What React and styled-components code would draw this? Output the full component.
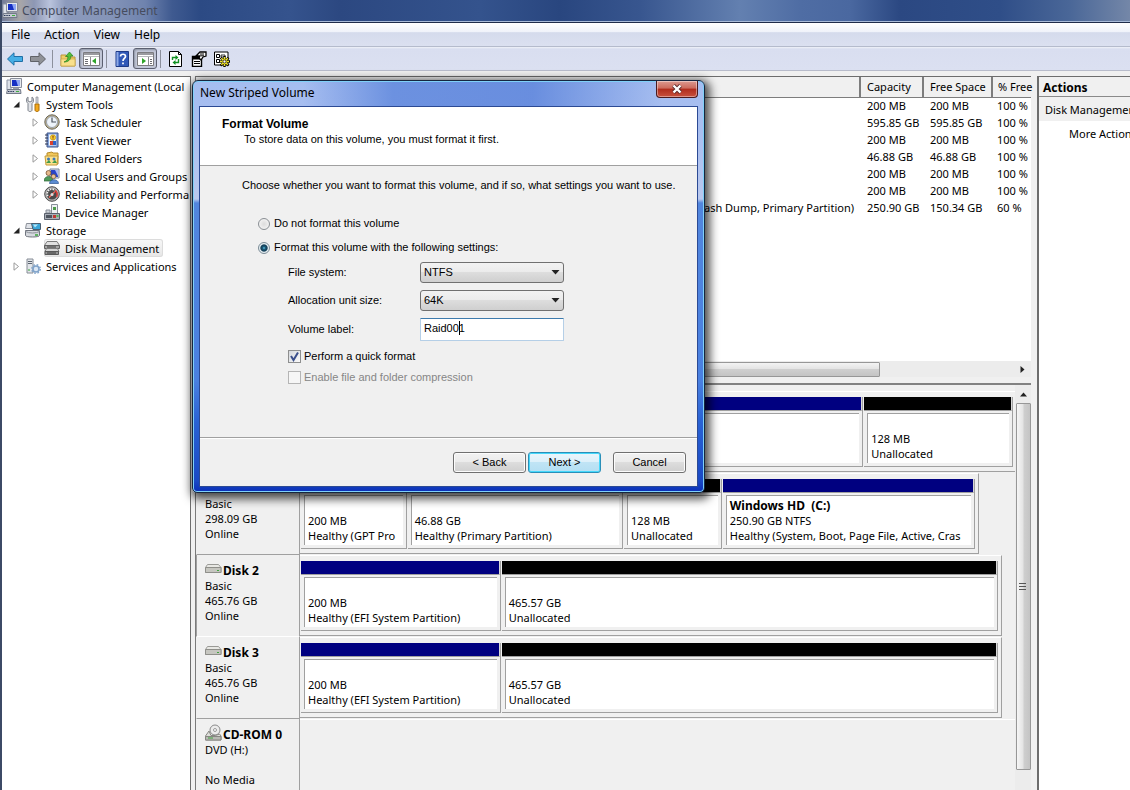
import styled, { createGlobalStyle, css } from "styled-components";

const GlobalStyle = createGlobalStyle`
  * { box-sizing: border-box; }
  body {
    margin: 0;
    overflow: hidden;
    background: #f0f0f0;
  }
  ul { list-style: none; margin: 0; padding: 0; }
  button, input, select { font: inherit; color: inherit; margin: 0; }
`;

const Window = styled.div`
  position: relative;
  display: flex;
  flex-direction: column;
  height: 100vh;
  border-left: 2px solid #3c4a66;
  font-family: "Noto Sans", "Open Sans", sans-serif;
  font-size: 11px;
  line-height: 15px;
  color: #000;
  background: #f0f0f0;
  overflow: hidden;
`;

const TitleBar = styled.header`
  display: flex;
  align-items: center;
  gap: 4px;
  height: 23px;
  padding: 0 0 2px 2px;
  margin-left: -2px;
  color: #464c5e;
  font-size: 12px;
  border-bottom: 1px solid #1f2c4a;
  box-shadow: inset 0 -1px 0 #a9bbd8;
  background: linear-gradient(90deg, #6c7696 0, #a8a6a8 20px, #8d97b4 34px, #b9c3dc 50px, #8c9abc 66px, #8494b8 110px, #6f83ae 145px, #3f5a90 172px, #2c4a84 200px, #35538d 290px, #2c4881 340px, #34538d 480px, #29467f 560px, #38568f 640px, #6380b0 740px, #4f6da4 800px, #4a68a0 850px, #2b4882 900px, #2f4e88 1000px, #4a6798 1070px, #7487a8 1130px);
`;

const MenuBar = styled.nav`
  display: flex;
  gap: 14px;
  height: 24px;
  padding-left: 9px;
  border-bottom: 1px solid #b5bbcc;
  background: linear-gradient(#fff 0, #f0f3fa 38%, #d5dbec 42%, #dbe0f0 100%);
`;

const MenuItem = styled.button`
  padding: 0;
  border: 0;
  background: none;
  font-size: 12px;
`;

const Toolbar = styled.div`
  display: flex;
  align-items: center;
  height: 24px;
  padding-left: 4px;
  gap: 6px;
  border-bottom: 1px solid #b8bccb;
  background: linear-gradient(#f0f2f8 0, #d9def0 2px, #dbe0f1 100%);
`;

const Tool = styled.button`
  display: grid;
  place-items: center;
  width: 17px;
  height: 22px;
  padding: 0;
  border: 1px solid transparent;
  border-radius: 3px;
  background: none;
  ${(p) => p.$pressed && css`
    width: 24px;
    height: 21px;
    border-color: #5c6070;
    background: #c3c8d8;
    box-shadow: inset 1px 1px 2px #8e94a5;
    margin-left: -3px;
    margin-right: -3px;
  `}
`;

const ToolSep = styled.span`
  width: 1px;
  height: 18px;
  background: #8c909c;
`;

const Body = styled.main`
  flex: 1;
  display: flex;
  min-height: 0;
  padding-top: 5px;
`;

const TreePane = styled.aside`
  flex: 0 0 189px;
  border: 1px solid #6d6d6d;
  border-left: 0;
  border-bottom: 0;
  background: #fff;
  overflow: hidden;
`;

const TreeRow = styled.div`
  display: flex;
  align-items: center;
  height: 18px;
  padding-left: ${(p) => (p.$depth ? p.$depth * 19 - 14 : 4)}px;
  white-space: nowrap;
  svg { flex: none; }
`;

const TreeArrow = styled.span`
  flex: none;
  display: grid;
  place-items: center;
  width: 18px;
  height: 18px;
`;

const TreeLabel = styled.span`
  display: flex;
  align-items: center;
  gap: 5px;
  height: 18px;
  ${(p) => p.$selected && css`
    padding-right: 4px;
    border-radius: 3px;
    background: linear-gradient(#f8f8f8, #e6e6e6);
    box-shadow: 0 0 0 1px #dcdcdc inset;
  `}
`;

const Center = styled.section`
  flex: 1;
  min-width: 0;
  display: flex;
  flex-direction: column;
  margin-left: 4px;
  border-left: 1px solid #7a7a7a;
  border-top: 1px solid #6d6d6d;
`;

const VolumeList = styled.div`
  display: flex;
  flex-direction: column;
  height: 308px;
  background: #fff;
  border-bottom: 2px solid #828282;
`;

const VolumeTable = styled.table`
  table-layout: fixed;
  width: 100%;
  border-collapse: collapse;
  white-space: nowrap;

  th {
    height: 20px;
    padding: 0 5px 0 6px;
    font-weight: normal;
    text-align: left;
    background: #f0f0f0;
    border-right: 2px solid #7d7d7d;
    border-bottom: 1px solid #7d7d7d;
  }
  th:last-child {
    border-right: 0;
    padding-right: 0;
  }
  td {
    height: 17px;
    padding: 0 0 1px 7px;
  }
  td:first-child {
    padding-right: 6px;
    text-align: right;
  }
  td:last-child, th:last-child { padding-left: 5px; }
`;

const Grow = styled.div`
  flex: 1;
`;

const HScroll = styled.div`
  display: flex;
  align-items: center;
  height: 16px;
  margin-bottom: 6px;
  padding-right: 6px;
  background: #ececec;
  box-shadow: 0 6px 0 #f0f0f0;
`;

const HThumb = styled.div`
  flex: 1;
  height: 15px;
  margin-right: 140px;
  border: 1px solid #979797;
  border-radius: 1px;
  background: linear-gradient(#f3f3f3 0, #e4e4e4 45%, #cfcfcf 50%, #c4c4c4);
`;

const DiskPane = styled.div`
  flex: 1;
  display: flex;
  min-height: 0;
`;

const DiskRows = styled.div`
  flex: 1;
  min-width: 0;
  padding-top: 6px;
  overflow: hidden;
`;

const DiskRow = styled.div`
  display: flex;
  height: 82px;
`;

const DiskInfo = styled.div`
  flex: 0 0 104px;
  padding: 8px 0 0 8px;
  border-right: 1px solid #a0a0a0;
  border-bottom: 1px solid ${(p) => (p.$selected ? "#fff" : "#a0a0a0")};
  border-left: 1px solid ${(p) => (p.$selected ? "#a0a0a0" : "#f0f0f0")};
  white-space: pre;
`;

const DiskName = styled.div`
  display: flex;
  align-items: flex-end;
  gap: 1px;
  height: 15px;
  font-size: 12px;
  font-weight: bold;
`;

const Strip = styled.div`
  display: flex;
  flex: 0 0 ${(p) => p.$width}px;
  padding: 5px 3px 4px 1px;
  border: solid;
  border-width: 1px 1px 1px 0;
  border-color: #fff #a0a0a0 #a0a0a0;
  margin-bottom: 1px;
`;

const Partition = styled.div`
  flex: ${(p) => p.$size} 1 0;
  min-width: 0;
  display: flex;
  flex-direction: column;
  border: solid #a0a0a0;
  border-width: 0 1px 1px 0;
  margin-right: 1px;
  &:last-child { margin-right: 0; }
`;

const Stripe = styled.div`
  height: 14px;
  border-right: 1px solid #d8d8d8;
  background: ${(p) => (p.$free ? "#000" : "#000080")};
  border-bottom: 1px solid #a0a0a0;
`;

const PartitionBox = styled.div`
  flex: 1;
  margin: 2px 3px 3px;
  padding: 2px 0 0 3px;
  border: solid #a0a0a0;
  border-width: 1px 0 0 1px;
  background: #fff;
  white-space: pre;
  overflow: hidden;
`;

const Line = styled.div`
  height: 15px;
  font-size: ${(p) => (p.$bold ? 12 : 11)}px;
  font-weight: ${(p) => (p.$bold ? "bold" : "normal")};
`;

const EmptyStrip = styled.div`
  flex: 1;
  border-top: 1px solid #fff;
`;

const VScroll = styled.div`
  display: flex;
  flex-direction: column;
  align-items: center;
  width: 16px;
  padding: 7px 0 20px;
  background: #ececec;
  gap: 6px;
`;

const VThumb = styled.div`
  flex: 1;
  display: grid;
  place-items: center;
  width: 15px;
  border: 1px solid #979797;
  border-radius: 1px;
  background: linear-gradient(90deg, #f6f6f6 0, #e4e4e4 45%, #cecece 55%, #c4c4c4);
`;

const Actions = styled.aside`
  flex: 0 0 93px;
  margin-left: 6px;
  border-left: 2px solid #6d6d6d;
  border-top: 1px solid #6d6d6d;
  background: #fff;
  white-space: nowrap;
  overflow: hidden;
`;

const ActionsTitle = styled.div`
  height: 20px;
  padding: 3px 4px 0;
  font-size: 12px;
  font-weight: bold;
  background: #f0f0f0;
  border-bottom: 1px solid #8a8a8a;
`;

const ActionsGroup = styled.div`
  height: 24px;
  padding: 5px 6px;
  background: #f0f0f0;
`;

const ActionLink = styled.a`
  display: block;
  padding: 5px 0 0 30px;
  color: #000;
  text-decoration: none;
`;

const Dialog = styled.form`
  position: absolute;
  left: 190px;
  top: 80px;
  display: flex;
  flex-direction: column;
  width: 513px;
  padding: 0 6px 5px;
  border: 1px solid #16263f;
  border-radius: 6px 6px 5px 5px;
  background:
    linear-gradient(90deg, transparent 110px, #4f7bd8aa 200px, #4a76d6aa 340px, transparent 470px) 0 0 / 100% 26px no-repeat,
    linear-gradient(#a5bdf0 0, #a9bff0 50px, #b9c8ee 118px, #5286dd 122px, #4a80e0 300px, #2a63d4 340px, #1a49c4 400px, #0a2fb8);
  box-shadow: inset 0 0 0 1px #7fd0f8, 2px 3px 10px 3px rgba(0, 0, 0, 0.7);
  font-family: "Liberation Sans", Arial, sans-serif;
  font-size: 11px;
  line-height: 13px;
`;

const DialogTitle = styled.div`
  display: flex;
  align-items: flex-start;
  justify-content: space-between;
  height: 25px;
  font: 12px/15px "Noto Sans", "Open Sans", sans-serif;
`;

const DialogName = styled.span`
  padding: 4px 0 0 1px;
`;

const CloseButton = styled.button`
  display: grid;
  place-items: center;
  width: 42px;
  height: 17px;
  padding: 0;
  border: 1px solid #4a1a1e;
  border-top: 0;
  border-radius: 0 0 4px 4px;
  background: linear-gradient(#dc9a90 0, #cc6a5c 45%, #b02c1c 50%, #c8513e 100%);
  box-shadow: inset 0 0 0 1px #ffffff66;
`;

const DialogBody = styled.div`
  border: 1px solid #2c4a94;
  background: #f0f0f0;
`;

const DialogHeader = styled.div`
  height: 59px;
  padding: 10px 22px 0;
  border-bottom: 1px solid #a0a0a0;
  background: #fff;
`;

const Heading = styled.h1`
  margin: 0;
  font-size: 12px;
  line-height: 15px;
`;

const Sub = styled.p`
  margin: 1px 0 0 22px;
`;

const DialogContent = styled.div`
  height: 271px;
  padding: 13px 16px 0 42px;
`;

const Intro = styled.p`
  margin: 0 0 25px;
  white-space: nowrap;
`;

const Choice = styled.label`
  display: flex;
  align-items: center;
  gap: 4px;
  height: 13px;
  margin-bottom: ${(p) => p.$after || 0}px;
  margin-left: ${(p) => p.$indent}px;
  color: ${(p) => (p.$disabled ? "#868686" : "inherit")};
`;

const Radio = styled.input`
  appearance: none;
  width: 12px;
  height: 12px;
  border: 1px solid #8a8f94;
  border-radius: 50%;
  background: radial-gradient(#dcdcdc, #fafafa);
  &:checked {
    border-color: #7b8b96;
    background: radial-gradient(circle at 50% 50%, #5fc4e6 0, #1b5876 22%, #123c55 45%, #e4edf1 58%);
  }
`;

const Check = styled.span`
  position: relative;
  display: grid;
  width: 13px;
  height: 13px;
  margin-right: -1px;
  input {
    appearance: none;
    width: 13px;
    height: 13px;
    border: 1px solid #8e8f8f;
    background: linear-gradient(135deg, #d5d8dd, #fafafa);
  }
  input:disabled {
    border-color: #b5b5b5;
    background: #f6f6f6;
  }
  svg {
    position: absolute;
    inset: 0;
    pointer-events: none;
  }
`;

const Fields = styled.div`
  display: grid;
  grid-template-columns: 132px 144px;
  row-gap: 7px;
  align-items: center;
  margin: 8px 0 9px 46px;
`;

const Field = styled.span`
  position: relative;
  display: grid;
  grid-template-columns: minmax(0, 1fr);
  svg {
    position: absolute;
    right: 4px;
    top: 8px;
    pointer-events: none;
  }
`;

const Select = styled.select`
  appearance: none;
  height: 21px;
  padding: 0 3px;
  border: 1px solid #707070;
  border-radius: 3px;
  background: linear-gradient(#f2f2f2 0, #ebebeb 48%, #dddddd 50%, #cfcfcf);
`;

const TextBox = styled.input`
  height: 23px;
  padding: 0 3px 4px;
  border: 1px solid #b5cfe7;
  border-top-color: #3d7bad;
  border-radius: 1px;
  background: #fff;
`;

const Caret = styled.i`
  position: absolute;
  left: 39px;
  top: 3px;
  width: 1px;
  height: 14px;
  background: #000;
`;

const Buttons = styled.div`
  display: flex;
  justify-content: flex-end;
  gap: 2px;
  height: 49px;
  padding: 14px 11px 0;
  border-top: 1px solid #a0a0a0;
  box-shadow: inset 0 1px 0 #fff;
`;

const Button = styled.button`
  width: 73px;
  height: 21px;
  padding: 0;
  border: 1px solid #707070;
  border-radius: 3px;
  background: linear-gradient(#f2f2f2 0, #ebebeb 48%, #dddddd 50%, #cfcfcf);
  box-shadow: inset 0 0 0 1px #fcfcfc;
  ${(p) => p.$primary && css`
    border-color: #2a8fb8;
    background: linear-gradient(#eaf5fb 0, #dcf0fa 48%, #c0e4f5 50%, #b4dff3);
    box-shadow: inset 0 0 0 1px #45d8fb;
  `}
  &:last-child { margin-left: 10px; }
`;

const Icon = ({ children, size = 16 }) => (
  <svg width={size} height={size} viewBox="0 0 16 16" aria-hidden="true">{children}</svg>
);

const ComputerIcon = () => (
  <Icon>
    <path d="M1 2h4v10H1z" fill="#dfe3ea" stroke="#8b93a3" />
    <path d="M4.500.5h11v9h-11z" fill="#e6e9ee" stroke="#8a8f9c" />
    <path d="M6 2h8v6H6z" fill="#1630c4" />
    <path d="M10 2h4v6h-2z" fill="#8fa6f4" />
    <path d="M7 10h6v2H7z" fill="#9aa0ac" />
    <path d="M1.500 11.500h13l.5 4H.5z" fill="#c5c9d1" stroke="#737a88" />
    <path d="M2 13.500h6" stroke="#2c3a5c" strokeDasharray="1.500 .8" />
    <path d="M10 13.500h3" stroke="#3fae3f" />
  </Icon>
);

const ToolsIcon = () => (
  <Icon>
    <path d="M3 1v4l2 1 2-1V1c2 1 2 5 0 6.500V14c0 2-4 2-4 0V7.500C1 6 1 2 3 1z" fill="#e2e4e8" stroke="#7d828b" />
    <path d="M11 1h2v6h-2z" fill="#d5d8dd" stroke="#868b94" strokeWidth=".7" />
    <path d="M10 8h4v6c0 2-4 2-4 0z" fill="#f4a91c" stroke="#a86c08" />
  </Icon>
);

const ClockIcon = () => (
  <Icon>
    <circle cx="8" cy="8" r="7.200" fill="#c4b489" stroke="#67665e" />
    <circle cx="8" cy="8" r="5.500" fill="#edf3fa" stroke="#9aa2ad" />
    <path d="M8 3.500V8h4" stroke="#4d5560" fill="none" strokeWidth="1.200" />
  </Icon>
);

const EventIcon = () => (
  <Icon>
    <path d="M3 1h11v14H3z" fill="#86a6dd" stroke="#3f578c" />
    <path d="M5 2.500h7v11H5z" fill="#f3f5fa" />
    <circle cx="9" cy="5.500" r="2.700" fill="#f6cf2a" stroke="#b08810" strokeWidth=".6" />
    <path d="M9 3.800v2M9 6.500v.8" stroke="#7a1c10" />
    <path d="M6 9h3v4H6z" fill="#d9422e" />
    <path d="M9 9h3v4H9z" fill="#2e63c9" />
    <path d="M1 3h3M1 6h3M1 9h3M1 12h3" stroke="#2b3350" />
  </Icon>
);

const SharedIcon = () => (
  <Icon>
    <path d="M3 3l5-1 1 1h5v11H3z" fill="#f2c75a" stroke="#b58a2a" />
    <path d="M1 6h13l-1 9H2z" fill="#fbe08c" stroke="#c39a38" />
    <circle cx="4.500" cy="9" r="1.500" fill="#3c77b8" />
    <path d="M2 13l3-3 2 3z" fill="#3f9b4b" />
    <circle cx="10" cy="9" r="1.500" fill="#3c77b8" />
    <path d="M8 13l3-3 2 3z" fill="#3f9b4b" />
  </Icon>
);

const UsersIcon = () => (
  <Icon>
    <path d="M6 1h9v9H6z" fill="#dfe4ee" stroke="#7c869c" />
    <path d="M7 2h7v7H7z" fill="#2944c8" />
    <path d="M11 2h3v6z" fill="#a9b8f4" />
    <circle cx="4.500" cy="5" r="2.500" fill="#e6b98c" stroke="#6a4422" strokeWidth=".7" />
    <path d="M0 13c0-6 9-6 9 0z" fill="#4f9a5a" stroke="#2c6436" strokeWidth=".7" />
    <circle cx="9.500" cy="8.500" r="2.200" fill="#e9c39b" stroke="#7a5028" strokeWidth=".7" />
    <path d="M5.500 15.500c0-5 9-5 9 0z" fill="#5b8cd2" stroke="#2e5592" strokeWidth=".7" />
  </Icon>
);

const GaugeIcon = () => (
  <Icon>
    <circle cx="8" cy="8" r="7.300" fill="#b5b5b5" stroke="#4a4a4a" />
    <circle cx="8" cy="8" r="5.500" fill="#4a4a4a" />
    <path d="M3.800 10a4.500 4.500 0 018-4.500" stroke="#f4f4f4" fill="none" strokeDasharray="1.500 1" strokeWidth="1.800" />
    <path d="M11 4.500A5 5 0 0112.500 11" stroke="#e03a34" fill="none" strokeWidth="1.600" />
    <path d="M5 11.500l5.500-5.500" stroke="#ff6a5c" strokeWidth="1.300" />
    <circle cx="8" cy="8.500" r="1.500" fill="#ddd" />
  </Icon>
);

const DeviceIcon = () => (
  <Icon>
    <path d="M7.500.5h6v9h-6z" fill="#eef0f3" stroke="#878d97" />
    <path d="M9 3h3v3H9z" fill="#4d9a4a" />
    <path d="M2 6h4v3H2z" fill="#cfd3d9" stroke="#868c96" />
    <path d="M.5 9.500h15v6H.5z" fill="#a9aeb8" stroke="#5b616c" />
    <path d="M2 11h6v3H2z" fill="#4e545e" />
    <path d="M9 11h3v3H9z" fill="#c03a34" />
    <path d="M12.500 11h2v2h-2z" fill="#57b757" />
  </Icon>
);

const StorageIcon = () => (
  <Icon>
    <path d="M1.500 1.500h6l1 5h-8z" fill="#dfe2e7" stroke="#8b9099" />
    <path d="M6.500 1.500h9v6H8z" fill="#3aa6d8" stroke="#4a5e70" />
    <path d="M8 2.500h5l-3 3z" fill="#b5e6f8" />
    <path d="M.5 8.500h14v5c0 2-14 2-14 0z" fill="#d6d9de" stroke="#70757e" />
    <path d="M.5 9.500c3 2 11 2 14 0" stroke="#8b9099" fill="none" />
    <path d="M10 13h3" stroke="#37a637" strokeWidth="1.500" />
  </Icon>
);

const DiskMgmtIcon = () => (
  <Icon>
    <path d="M3 1.500h10l2.500 4H.5z" fill="#e0e0e0" stroke="#7c7c7c" />
    <path d="M.5 5.500h15v3H.5z" fill="#a5a5a5" stroke="#606060" />
    <path d="M2.500 8.500h11l1.500 3H1z" fill="#d4d4d4" stroke="#7c7c7c" />
    <path d="M1 11.500h13.500v3H1z" fill="#979797" stroke="#5a5a5a" />
    <path d="M3 7h9M3 13h9" stroke="#3c3c3c" />
  </Icon>
);

const ServicesIcon = () => (
  <Icon>
    <path d="M2 1h6v14H2z" fill="#e3e6ea" stroke="#868c96" />
    <path d="M3 3.500h4M3 5.500h4" stroke="#5b6470" />
    <path d="M3 12h2" stroke="#37a637" />
    <circle cx="11" cy="11" r="3" fill="#dbe7f4" stroke="#7fa2c9" strokeWidth="1.600" />
    <circle cx="11" cy="11" r="4.300" fill="none" stroke="#7fa2c9" strokeWidth="1.300" strokeDasharray="1.700 1.700" />
  </Icon>
);

const ArrowIcon = ({ fill, stroke, flip }) => (
  <Icon>
    <path
      d="M0.500 8L7 1.800V5.500H15.500V10.500H7V14.200Z"
      fill={fill}
      stroke={stroke}
      transform={flip ? "matrix(-1 0 0 1 16 0)" : undefined}
    />
  </Icon>
);

const FolderUpIcon = () => (
  <Icon>
    <path d="M1 4h5l1 2h8v9H1z" fill="#f0cc66" stroke="#bb9638" />
    <path d="M1 8h14v7H1z" fill="#f9e08c" stroke="#c5a348" strokeWidth=".7" />
    <path d="M4 11c3-1 4-3 4-5.500H5.500L9.500 1 13 5h-2.200c0 4-2.800 6-6.800 6z" fill="#53c13c" stroke="#2d7f20" strokeWidth=".7" />
  </Icon>
);

const PaneIcon = ({ right }) => (
  <svg width="17" height="16" viewBox="0 0 17 16" aria-hidden="true">
    <path d="M.5 1.500h16v13H.5z" fill="#fff" stroke="#7c7c80" />
    <path d="M1 2h15v2H1z" fill="#9a9aa0" />
    <path d="M1 5.500h15" stroke="#b9b9be" />
    <path d={right ? "M11.500 6v8" : "M7.500 6v8"} stroke="#8b8b90" />
    <path d={right ? "M13 8.500h2M13 10.500h2M13 12.500h2" : "M2 8.500h3M2 10.500h3M2 12.500h3"} stroke="#6d6d72" />
    <path d={right ? "M5 7l4 3-4 3z" : "M13 7l-4 3 4 3z"} fill="#2fa52a" />
  </svg>
);

const HelpIcon = () => (
  <Icon>
    <path d="M2 .5h12.500v15H2z" fill="#3058b8" stroke="#1e3a86" />
    <path d="M2.500 1h2v14h-2z" fill="#8ca8e6" />
    <path d="M6.500 5.500c0-3 5-3 5 0 0 2-2.500 2-2.500 4.500M9 11.500v1.800" stroke="#fff" fill="none" strokeWidth="1.700" />
  </Icon>
);

const RefreshIcon = () => (
  <Icon>
    <path d="M1.500.5h9l3 3v12h-12z" fill="#fff" stroke="#000" />
    <path d="M10.500.5v3h3" fill="none" stroke="#000" />
    <path d="M4.500 9V6.500h4M10.500 8v3.500h-4" fill="none" stroke="#119022" strokeWidth="1.400" />
    <path d="M7.500 4l3 2.500-3 2.500zM7.500 9l-3 2.500 3 2.500z" fill="#119022" />
  </Icon>
);

const PropertiesIcon = () => (
  <Icon>
    <path d="M1.500 5.500h9v10h-9z" fill="#fff" stroke="#000" strokeWidth="1.400" />
    <path d="M2 6h8v2H2zM3 10.500h6M3 12.500h6" fill="#000" stroke="#000" />
    <path d="M5 5l4-4h6v4l-3 1-2 3-2-2 1-2z" fill="#fff" stroke="#000" strokeWidth="1.300" />
    <path d="M9 3h4M10 4.800h3" stroke="#000" />
  </Icon>
);

const SettingsIcon = () => (
  <Icon>
    <path d="M.5 1h13.500v13H.5z" fill="#fff" stroke="#000" />
    <path d="M2.500 3.500h3v3h-3zM2.500 8.500h3v3h-3z" fill="none" stroke="#000" />
    <path d="M7 4h4v2H7z" fill="none" stroke="#000" strokeWidth=".8" />
    <path d="M10.500 5v11M5 10.500h11M6.600 6.600l8 8M14.600 6.600l-8 8" stroke="#000" strokeWidth="2.400" />
    <path d="M10.500 6v9M6 10.500h9M7.300 7.300l6.500 6.500M13.800 7.300l-6.500 6.500" stroke="#f0e428" strokeWidth="1.500" />
    <circle cx="10.500" cy="10.500" r="1.500" fill="#fff" stroke="#000" strokeWidth=".7" />
  </Icon>
);

const DriveIcon = () => (
  <svg width="17" height="15" viewBox="0 0 17 15" aria-hidden="true">
    <path d="M2.500 1.500h11l2.500 3v5H.5v-5z" fill="#e8e8e4" stroke="#9a9a96" />
    <path d="M.5 4.500H16v5H.5z" fill="#c6c6c0" stroke="#8f8f8a" />
    <path d="M12 7.500h2" stroke="#3fa63f" />
  </svg>
);

const CdIcon = () => (
  <svg width="17" height="18" viewBox="0 0 17 18" aria-hidden="true">
    <circle cx="10" cy="6" r="5" fill="#ececec" stroke="#8a8a8a" />
    <circle cx="10" cy="6" r="1.500" fill="#fff" stroke="#9a9a9a" />
    <path d="M4 7l-3.500 5v4H16v-4l-1.500-2-4 1.500H6z" fill="#dededa" stroke="#868682" />
    <path d="M.5 12.500H16v3.500H.5z" fill="#b9b9b4" stroke="#868682" />
    <path d="M3 14h5" stroke="#3fa63f" />
  </svg>
);

const Triangle = ({ points, w, h }) => (
  <svg width={w} height={h} viewBox={`0 0 ${w} ${h}`} aria-hidden="true">
    <path d={points} fill="#222" />
  </svg>
);

const OpenArrow = () => <Triangle w={7} h={7} points="M6.500 0.500V6.500H0.500Z" />;

const ClosedArrow = () => (
  <svg width="7" height="9" viewBox="0 0 7 9" aria-hidden="true">
    <path d="M1 .8v7.400l4.500-3.700z" fill="#fff" stroke="#9a9a9a" />
  </svg>
);

const tree = [
  { label: "Computer Management (Local", depth: 0, icon: ComputerIcon },
  { label: "System Tools", depth: 1, icon: ToolsIcon, open: true },
  { label: "Task Scheduler", depth: 2, icon: ClockIcon, open: false },
  { label: "Event Viewer", depth: 2, icon: EventIcon, open: false },
  { label: "Shared Folders", depth: 2, icon: SharedIcon, open: false },
  { label: "Local Users and Groups", depth: 2, icon: UsersIcon, open: false },
  { label: "Reliability and Performa", depth: 2, icon: GaugeIcon, open: false },
  { label: "Device Manager", depth: 2, icon: DeviceIcon },
  { label: "Storage", depth: 1, icon: StorageIcon, open: true },
  { label: "Disk Management", depth: 2, icon: DiskMgmtIcon, selected: true },
  { label: "Services and Applications", depth: 1, icon: ServicesIcon, open: false },
];

const volumes = [
  ["", "200 MB", "200 MB", "100 %"],
  ["", "595.85 GB", "595.85 GB", "100 %"],
  ["", "200 MB", "200 MB", "100 %"],
  ["", "46.88 GB", "46.88 GB", "100 %"],
  ["", "200 MB", "200 MB", "100 %"],
  ["", "200 MB", "200 MB", "100 %"],
  ["Crash Dump, Primary Partition)", "250.90 GB", "150.34 GB", "60 %"],
];

const disks = [
  {
    name: "Disk 0", info: ["Basic", "596.17 GB", "Online"], width: 717,
    parts: [
      { size: 562, lines: ["", "", ""] },
      { size: 148, free: true, lines: ["", "128 MB", "Unallocated"] },
    ],
  },
  {
    name: "Disk 1", info: ["Basic", "298.09 GB", "Online"], width: 679,
    parts: [
      { size: 105, lines: ["", "200 MB", "Healthy (GPT Pro"] },
      { size: 215, lines: ["", "46.88 GB", "Healthy (Primary Partition)"] },
      { size: 97, free: true, lines: ["", "128 MB", "Unallocated"] },
      { size: 252, bold: true, lines: ["Windows HD  (C:)", "250.90 GB NTFS", "Healthy (System, Boot, Page File, Active, Cras"] },
    ],
  },
  {
    name: "Disk 2", info: ["Basic", "465.76 GB", "Online"], width: 702, selected: true,
    parts: [
      { size: 199, lines: ["", "200 MB", "Healthy (EFI System Partition)"] },
      { size: 496, free: true, lines: ["", "465.57 GB", "Unallocated"] },
    ],
  },
  {
    name: "Disk 3", info: ["Basic", "465.76 GB", "Online"], width: 702,
    parts: [
      { size: 199, lines: ["", "200 MB", "Healthy (EFI System Partition)"] },
      { size: 496, free: true, lines: ["", "465.57 GB", "Unallocated"] },
    ],
  },
  { name: "CD-ROM 0", info: ["DVD (H:)", "", "No Media"], cd: true },
];

const Disk = ({ disk }) => (
  <DiskRow>
    <DiskInfo $selected={disk.selected}>
      <DiskName>{disk.cd ? <CdIcon /> : <DriveIcon />}{disk.name}</DiskName>
      {disk.info.map((line, i) => <Line key={i}>{line}</Line>)}
    </DiskInfo>
    {disk.parts ? (
      <Strip $width={disk.width}>
        {disk.parts.map((part, i) => (
          <Partition key={i} $size={part.size}>
            <Stripe $free={part.free} />
            <PartitionBox>
              {part.lines.map((line, n) => (
                <Line key={n} $bold={part.bold && n === 0}>{line}</Line>
              ))}
            </PartitionBox>
          </Partition>
        ))}
      </Strip>
    ) : <EmptyStrip />}
  </DiskRow>
);

const FormatDialog = () => (
  <Dialog onSubmit={(e) => e.preventDefault()}>
    <DialogTitle>
      <DialogName>New Striped Volume</DialogName>
      <CloseButton type="button" aria-label="Close">
        <svg width="12" height="10" viewBox="0 0 12 10" aria-hidden="true">
          <path d="M2.500 1.500l7 7M9.500 1.500l-7 7" stroke="#5a2a2c" strokeWidth="4" />
          <path d="M2.500 1.500l7 7M9.500 1.500l-7 7" stroke="#fff" strokeWidth="2.400" />
        </svg>
      </CloseButton>
    </DialogTitle>
    <DialogBody>
      <DialogHeader>
        <Heading>Format Volume</Heading>
        <Sub>To store data on this volume, you must format it first.</Sub>
      </DialogHeader>
      <DialogContent>
        <Intro>Choose whether you want to format this volume, and if so, what settings you want to use.</Intro>
        <Choice $indent={16} $after={11}>
          <Radio type="radio" name="format" />
          Do not format this volume
        </Choice>
        <Choice $indent={16}>
          <Radio type="radio" name="format" defaultChecked />
          Format this volume with the following settings:
        </Choice>
        <Fields>
          <label htmlFor="fs">File system:</label>
          <Field>
            <Select id="fs"><option>NTFS</option></Select>
            <Triangle w={9} h={5} points="M0.500 0H8.500L4.500 4.500Z" />
          </Field>
          <label htmlFor="unit">Allocation unit size:</label>
          <Field>
            <Select id="unit"><option>64K</option></Select>
            <Triangle w={9} h={5} points="M0.500 0H8.500L4.500 4.500Z" />
          </Field>
          <label htmlFor="label">Volume label:</label>
          <Field>
            <TextBox id="label" defaultValue="Raid001" />
            <Caret />
          </Field>
        </Fields>
        <Choice $indent={46} $after={8}>
          <Check>
            <input type="checkbox" defaultChecked />
            <svg width="13" height="13" viewBox="0 0 13 13" aria-hidden="true">
              <path d="M3 6l2.500 4L10 2.500" fill="none" stroke="#3a4f8c" strokeWidth="2" />
            </svg>
          </Check>
          Perform a quick format
        </Choice>
        <Choice $indent={46} $disabled>
          <Check><input type="checkbox" disabled /></Check>
          Enable file and folder compression
        </Choice>
      </DialogContent>
      <Buttons>
        <Button type="button">&lt; Back</Button>
        <Button $primary>Next &gt;</Button>
        <Button type="button">Cancel</Button>
      </Buttons>
    </DialogBody>
  </Dialog>
);

const App = () => (
  <>
    <GlobalStyle />
    <Window>
      <TitleBar><ComputerIcon />Computer Management</TitleBar>
      <MenuBar>
        {["File", "Action", "View", "Help"].map((m) => <MenuItem key={m}>{m}</MenuItem>)}
      </MenuBar>
      <Toolbar>
        <Tool aria-label="Back"><ArrowIcon fill="#45aee6" stroke="#1f6fa6" /></Tool>
        <Tool aria-label="Forward"><ArrowIcon flip fill="#909298" stroke="#606268" /></Tool>
        <ToolSep />
        <Tool aria-label="Up"><FolderUpIcon /></Tool>
        <Tool $pressed aria-label="Console tree"><PaneIcon /></Tool>
        <ToolSep />
        <Tool aria-label="Help topics"><HelpIcon /></Tool>
        <Tool $pressed aria-label="Action pane"><PaneIcon right /></Tool>
        <ToolSep />
        <Tool aria-label="Refresh"><RefreshIcon /></Tool>
        <Tool aria-label="Properties"><PropertiesIcon /></Tool>
        <Tool aria-label="Settings"><SettingsIcon /></Tool>
      </Toolbar>
      <Body>
        <TreePane>
          <ul>
            {tree.map((item) => (
              <li key={item.label}>
                <TreeRow $depth={item.depth}>
                  {item.depth > 0 && (
                    <TreeArrow>
                      {item.open === true && <OpenArrow />}
                      {item.open === false && <ClosedArrow />}
                    </TreeArrow>
                  )}
                  <TreeLabel $selected={item.selected}><item.icon />{item.label}</TreeLabel>
                </TreeRow>
              </li>
            ))}
          </ul>
        </TreePane>
        <Center>
          <VolumeList>
            <VolumeTable>
              <colgroup>
                <col />
                <col width="63" />
                <col width="69" />
                <col width="39" />
              </colgroup>
              <thead>
                <tr><th aria-label="Status" /><th>Capacity</th><th>Free Space</th><th>% Free</th></tr>
              </thead>
              <tbody>
                {volumes.map((row, i) => (
                  <tr key={i}>
                    {row.map((cell, n) => <td key={n}>{cell}</td>)}
                  </tr>
                ))}
              </tbody>
            </VolumeTable>
            <Grow />
            <HScroll>
              <HThumb />
              <Triangle w={5} h={7} points="M0.500 0V7L4.500 3.500Z" />
            </HScroll>
          </VolumeList>
          <DiskPane>
            <DiskRows>
              {disks.map((d) => <Disk key={d.name} disk={d} />)}
            </DiskRows>
            <VScroll>
              <Triangle w={7} h={5} points="M0 4.500H7L3.500 0.500Z" />
              <VThumb>
                <svg width="8" height="8" viewBox="0 0 8 8" aria-hidden="true">
                  <path d="M0 .5h7M0 3.500h7M0 6.500h7" stroke="#555" />
                </svg>
              </VThumb>
            </VScroll>
          </DiskPane>
        </Center>
        <Actions>
          <ActionsTitle>Actions</ActionsTitle>
          <ActionsGroup>Disk Management</ActionsGroup>
          <ActionLink href="#more">More Actions</ActionLink>
        </Actions>
      </Body>
      <FormatDialog />
    </Window>
  </>
);

export default App;
